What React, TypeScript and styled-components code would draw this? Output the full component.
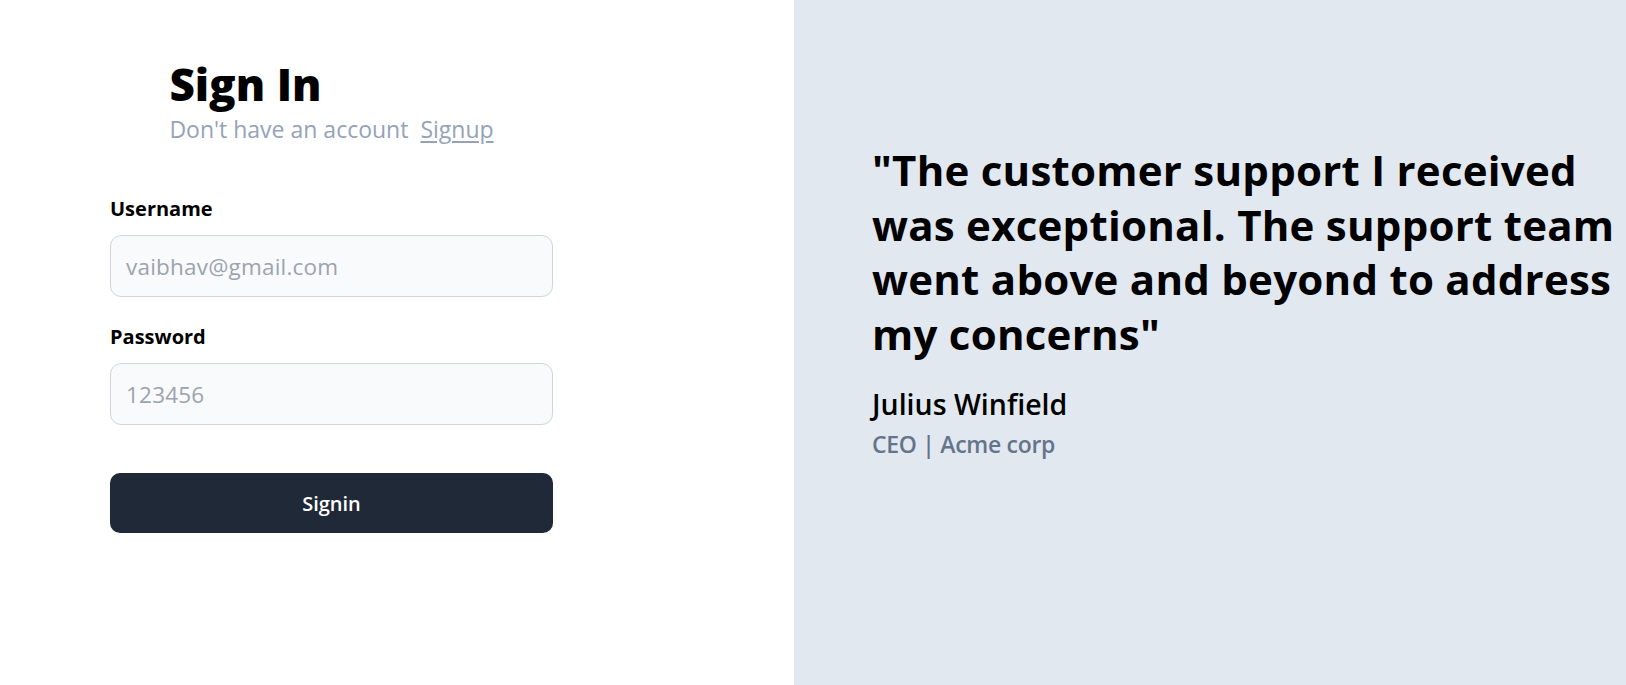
import React from "react";
import styled, { createGlobalStyle } from "styled-components";

const GlobalStyle = createGlobalStyle`
  html, body { margin: 0; padding: 0; }
  body { font-family: "Open Sans", "Noto Sans", sans-serif; background: #ffffff; }
  * { box-sizing: border-box; }
`;

const Page = styled.div`
  display: grid;
  grid-template-columns: 794px 1fr;
  height: 685px;
  overflow: hidden;
`;

const LeftPanel = styled.section`
  background: #ffffff;
  padding: 57px 0 0 110px;
`;

const Form = styled.div`
  width: 443px;
  display: flex;
  flex-direction: column;
`;

const Header = styled.div`
  display: flex;
  justify-content: center;
`;

const HeaderInner = styled.div`
  display: flex;
  flex-direction: column;
`;

const Title = styled.h1`
  margin: 0;
  font-size: 44px;
  line-height: 54px;
  font-weight: 800;
  color: #000000;
`;

const Subtitle = styled.div`
  font-size: 23px;
  line-height: 36px;
  color: #94a3b8;
  display: flex;
  gap: 12px;
`;

const SignupLink = styled.a`
  color: #94a3b8;
  text-decoration: underline;
  text-underline-offset: 3px;
  cursor: pointer;
`;

const Fields = styled.div`
  display: flex;
  flex-direction: column;
  margin-top: 47px;
`;

const Label = styled.label<{ $spaced?: boolean }>`
  font-size: 20px;
  line-height: 30px;
  font-weight: 700;
  color: #000000;
  margin-top: ${(p) => (p.$spaced ? "25px" : "0")};
  margin-bottom: 11px;
`;

const Input = styled.input`
  width: 100%;
  height: 62px;
  border: 1px solid #d1d5db;
  border-radius: 11px;
  background: #f9fafb;
  padding: 0 15px;
  font-family: "Open Sans", "Noto Sans", sans-serif;
  font-size: 22.5px;
  letter-spacing: 0.2px;
  color: #111827;
  outline: none;
  &::placeholder { color: #9ca3af; }
`;

const Button = styled.button`
  margin-top: 48px;
  width: 100%;
  height: 60px;
  border: none;
  border-radius: 10px;
  background: #1f2937;
  color: #ffffff;
  font-family: "Open Sans", "Noto Sans", sans-serif;
  font-size: 20px;
  font-weight: 600;
  cursor: pointer;
`;

const RightPanel = styled.section`
  background: #e2e8f0;
  padding: 143px 0 0 78px;
`;

const Quote = styled.blockquote`
  margin: 0;
  font-size: 42px;
  line-height: 54.6px;
  font-weight: 700;
  color: #000000;
  letter-spacing: 0.25px;
  white-space: nowrap;
`;

const Name = styled.div`
  margin-top: 23px;
  font-size: 28.5px;
  line-height: 40px;
  font-weight: 600;
  color: #000000;
`;

const Role = styled.div`
  margin-top: 3px;
  font-size: 23px;
  line-height: 34px;
  font-weight: 600;
  letter-spacing: -0.3px;
  color: #64748b;
`;

export default function App() {
  return (
    <>
      <GlobalStyle />
      <Page>
        <LeftPanel>
          <Form>
            <Header>
              <HeaderInner>
                <Title>Sign In</Title>
                <Subtitle>
                  <span>Don't have an account</span>
                  <SignupLink>Signup</SignupLink>
                </Subtitle>
              </HeaderInner>
            </Header>
            <Fields>
              <Label htmlFor="username">Username</Label>
              <Input id="username" placeholder="vaibhav@gmail.com" />
              <Label htmlFor="password" $spaced>Password</Label>
              <Input id="password" type="password" placeholder="123456" />
              <Button>Signin</Button>
            </Fields>
          </Form>
        </LeftPanel>
        <RightPanel>
          <Quote>
            "The customer support I received
            <br />
            was exceptional. The support team
            <br />
            went above and beyond to address
            <br />
            my concerns"
          </Quote>
          <Name>Julius Winfield</Name>
          <Role>CEO | Acme corp</Role>
        </RightPanel>
      </Page>
    </>
  );
}
